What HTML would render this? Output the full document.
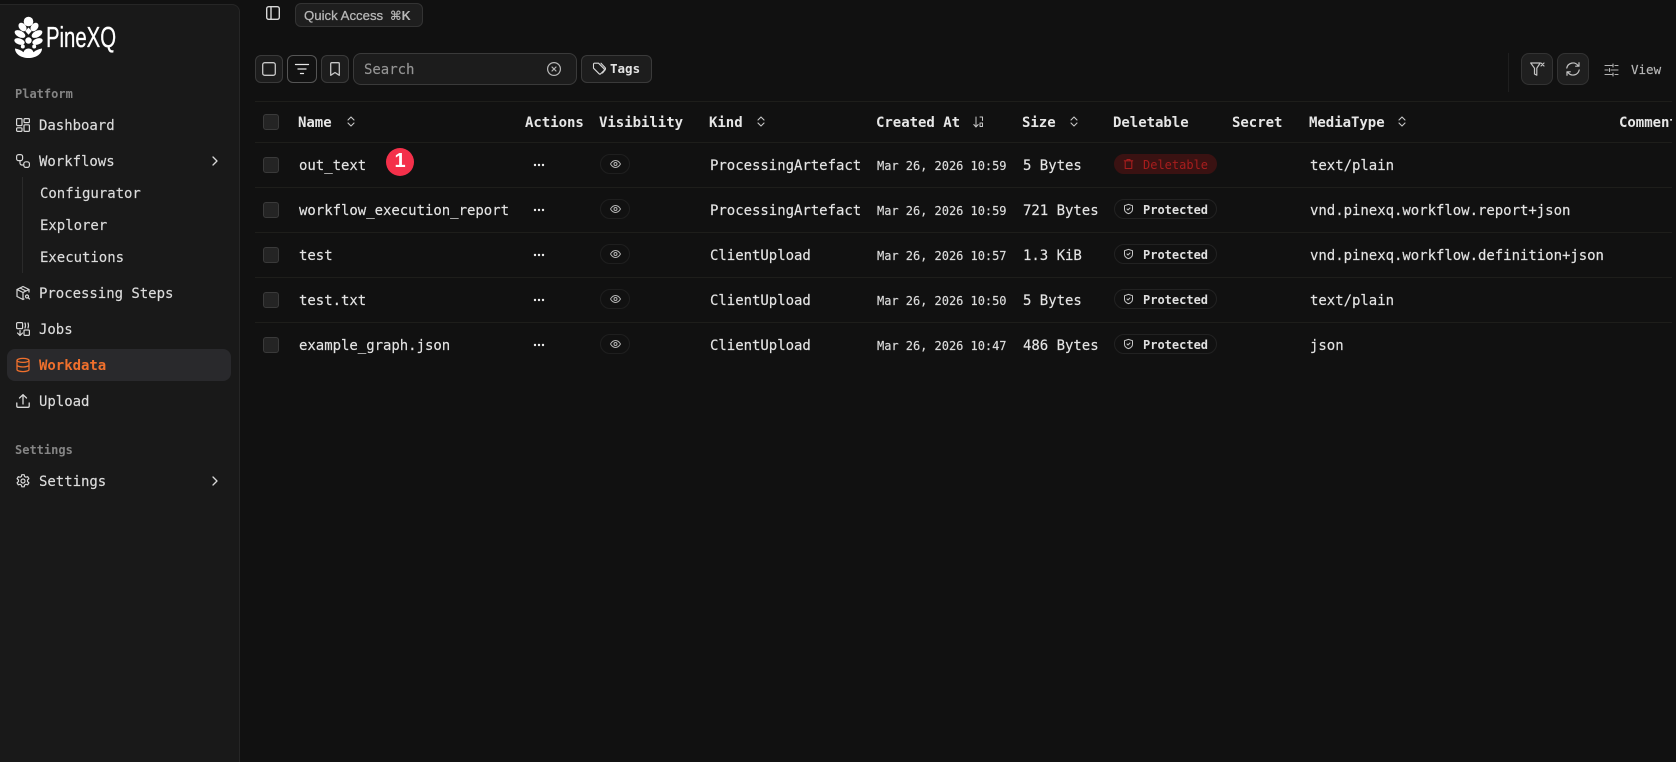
<!DOCTYPE html>
<html><head><meta charset="utf-8"><title>PineXQ Workdata</title>
<style>
*{box-sizing:border-box}
html,body{margin:0;padding:0;width:1676px;height:762px;overflow:hidden;background:#111;color:#e4e4e4;font-family:"DejaVu Sans Mono","Liberation Mono",monospace;font-size:14px;letter-spacing:-.03px}
.a{position:absolute}
.t{position:absolute;white-space:nowrap;line-height:20px;height:20px;margin-top:1px;-webkit-text-stroke:.15px currentColor}
.h{font-weight:700;color:#e6e6e6;-webkit-text-stroke:0}
.d{font-size:12px;color:#dcdcdc}
.l{position:absolute;left:255px;width:1417px;height:1px;background:#1e1e1b}
.cb{position:absolute;left:263px;width:16px;height:16px;border:1px solid #3a3a3a;border-radius:3px;background:#242424}
.eye{position:absolute;left:600px;width:30px;height:20px;border:1px solid #1f1f1f;border-radius:10px}
.bd{position:absolute;left:1114px;width:103px;height:20px;border:1px solid #222;border-radius:10px}
.bt{position:absolute;left:1143px;margin-top:1px;font-size:12px;line-height:20px;font-weight:700;color:#e0e0e0;white-space:nowrap;letter-spacing:0}
.btn{position:absolute;background:#1d1d1d;border:1px solid #3a3a3a;border-radius:6px}
svg{position:absolute;display:block;fill:none;stroke:currentColor;stroke-width:1.5;stroke-linecap:round;stroke-linejoin:round;overflow:visible}
.s{color:#dcdcdc}
</style></head><body>

<!-- Sidebar -->
<div class="a" style="left:0;top:4px;width:240px;height:758px;background:#191919;border:1px solid #262626;border-left:0;border-bottom:0;border-radius:0 8px 0 0"></div>

<svg style="left:14px;top:15px" width="30" height="44" viewBox="0 0 30 44">
<g fill="#fff" stroke="none">
<circle cx="14.500" cy="6.500" r="4.800"/>
<ellipse cx="8.500" cy="12" rx="3.400" ry="4.800" transform="rotate(-40 8.500 12)"/>
<ellipse cx="20.500" cy="12" rx="3.400" ry="4.800" transform="rotate(40 20.500 12)"/>
<path d="M14.500 12.500l3.200 3.600-3.200 3.600-3.200-3.600z"/>
<ellipse cx="6" cy="19" rx="3.200" ry="5.800" transform="rotate(-62 6 19)"/>
<ellipse cx="23" cy="19" rx="3.200" ry="5.800" transform="rotate(62 23 19)"/>
<ellipse cx="5.500" cy="26.500" rx="3" ry="5.400" transform="rotate(-72 5.500 26.500)"/>
<ellipse cx="23.500" cy="26.500" rx="3" ry="5.400" transform="rotate(72 23.500 26.500)"/>
<circle cx="14.500" cy="25.500" r="3.200"/>
<circle cx="8.800" cy="31.500" r="2"/><circle cx="20.200" cy="31.500" r="2"/>
<path d="M1 33.500c3 .5 6 1.500 8.500 3.800.6-2.400 2.700-3.800 5-3.800s4.400 1.400 5 3.800c2.500-2.300 5.500-3.300 8.500-3.800 0 5.500-6 9.500-13.500 9.500S1 39 1 33.500z"/>
</g></svg>
<svg style="left:46px;top:18px" width="72" height="36" viewBox="0 0 72 36">
<text x="0" y="29" fill="#fff" stroke="#fff" stroke-width=".3" font-family="Liberation Sans" font-size="29" textLength="70" lengthAdjust="spacingAndGlyphs">PineXQ</text></svg>

<div class="t" style="left:15px;top:83px;font-size:12px;font-weight:700;color:#858585;letter-spacing:0;-webkit-text-stroke:0">Platform</div>
<div class="t s" style="left:39px;top:115px">Dashboard</div>
<div class="t s" style="left:39px;top:151px">Workflows</div>
<div class="t s" style="left:40px;top:183px">Configurator</div>
<div class="t s" style="left:40px;top:215px">Explorer</div>
<div class="t s" style="left:40px;top:247px">Executions</div>
<div class="a" style="left:22px;top:177px;width:1px;height:96px;background:#2a2a2a"></div>
<div class="t s" style="left:39px;top:283px">Processing Steps</div>
<div class="t s" style="left:39px;top:319px">Jobs</div>
<div class="a" style="left:7px;top:349px;width:224px;height:32px;background:#29292c;border-radius:8px"></div>
<div class="t" style="left:39px;top:355px;color:#f0702c;font-weight:700;-webkit-text-stroke:0">Workdata</div>
<div class="t s" style="left:39px;top:391px">Upload</div>
<div class="t" style="left:15px;top:439px;font-size:12px;font-weight:700;color:#858585;letter-spacing:0;-webkit-text-stroke:0">Settings</div>
<div class="t s" style="left:39px;top:471px">Settings</div>

<!-- Sidebar icons -->
<svg style="left:16px;top:118px;color:#d8d8d8;stroke-width:1.200" width="14" height="14" viewBox="0 0 14 14"><rect x=".6" y=".6" width="5.400" height="7" rx="1"/><rect x="8" y=".6" width="5.400" height="4" rx="1"/><rect x="8" y="6.800" width="5.400" height="6.600" rx="1"/><rect x=".6" y="9.800" width="5.400" height="3.600" rx="1"/></svg>
<svg style="left:16px;top:154px;color:#d8d8d8;stroke-width:1.200" width="14" height="14" viewBox="0 0 14 14"><rect x=".6" y=".6" width="6" height="6" rx="2"/><rect x="7.800" y="7.800" width="5.600" height="5.600" rx="2"/><path d="M4 7v2a2 2 0 0 0 2 2h1.500"/></svg>
<svg style="left:211px;top:156px;color:#d8d8d8;stroke-width:1.300" width="8" height="10" viewBox="0 0 8 10"><path d="M2 1l4 4-4 4"/></svg>
<svg style="left:16px;top:286px;color:#d8d8d8;stroke-width:1.200" width="14" height="14" viewBox="0 0 14 14"><path d="M13 6V3.500L7 .5 1 3.500v7l6 3 1-.5"/><path d="M1 3.500l6 3 6-3M7 6.500v7M4 2l6 3"/><circle cx="11" cy="10.500" r="1.500"/><path d="M12.200 11.700l1.300 1.300"/></svg>
<svg style="left:16px;top:322px;color:#d8d8d8;stroke-width:1.200" width="14" height="14" viewBox="0 0 14 14"><rect x=".6" y=".6" width="6" height="6" rx="1"/><rect x="8" y="8" width="5.400" height="5.400" rx="1"/><path d="M9 1c.6 1.500.6 3.500 0 5M12 1c.6 1.500.6 3.500 0 5M4 8.500v5M1.500 11L4 13.500 6.500 11"/></svg>
<svg style="left:16px;top:358px;color:#f0702c;stroke-width:1.300" width="14" height="14" viewBox="0 0 14 14"><ellipse cx="7" cy="2.400" rx="6" ry="2"/><path d="M1 2.400v9.200c0 1.100 2.700 2 6 2s6-.9 6-2V2.400M1 7c0 1.100 2.700 2 6 2s6-.9 6-2"/></svg>
<svg style="left:16px;top:394px;color:#d8d8d8;stroke-width:1.300" width="14" height="14" viewBox="0 0 14 14"><path d="M.8 9v3a1.300 1.300 0 0 0 1.300 1.300h9.800a1.300 1.300 0 0 0 1.300-1.300V9M3.500 4L7 .7 10.500 4M7 .7V10"/></svg>
<svg style="left:16px;top:474px;color:#d8d8d8;stroke-width:1.200" width="14" height="14" viewBox="0 0 14 14"><path d="M5.800.7h2.400l.4 1.800 1.300.7 1.800-.5 1.200 2-1.400 1.300v1.500l1.400 1.300-1.200 2-1.800-.5-1.300.7-.4 1.800H5.800l-.4-1.800-1.300-.7-1.800.5-1.200-2 1.400-1.300V6L1.100 4.700l1.200-2 1.800.5 1.300-.7z"/><circle cx="7" cy="7" r="2"/></svg>
<svg style="left:211px;top:476px;color:#d8d8d8;stroke-width:1.300" width="8" height="10" viewBox="0 0 8 10"><path d="M2 1l4 4-4 4"/></svg>

<!-- Top bar -->
<svg style="left:266px;top:6px;color:#d8d8d8;stroke-width:1.400" width="14" height="14" viewBox="0 0 14 14"><rect x=".7" y=".7" width="12.600" height="12.600" rx="2"/><path d="M5 .7v12.600"/></svg>
<div class="btn" style="left:295px;top:3px;width:128px;height:24px;background:#1e1e1e;border-color:#333"></div>
<div class="t" style="left:304px;top:5px;font-family:'Liberation Sans',sans-serif;font-size:13.200px;color:#b8b8b8;letter-spacing:0;-webkit-text-stroke:.25px #b8b8b8">Quick Access</div>
<div class="t" style="left:390px;top:5px;font-family:'Liberation Sans','DejaVu Sans',sans-serif;font-size:12.500px;font-weight:700;color:#b8b8b8;letter-spacing:0;-webkit-text-stroke:0">⌘K</div>

<!-- Toolbar -->
<div class="btn" style="left:255px;top:55px;width:28px;height:28px"></div>
<svg style="left:262px;top:62px;color:#c8c8c8;stroke-width:1.300" width="14" height="14" viewBox="0 0 14 14"><rect x=".7" y=".7" width="12.600" height="12.600" rx="2"/></svg>
<div class="btn" style="left:287px;top:55px;width:30px;height:28px;background:#121212;border-color:#555"></div>
<svg style="left:295px;top:63px;color:#e6e6e6;stroke-width:1.300" width="14" height="12" viewBox="0 0 14 12"><path d="M.5 1.500h13M3 6h8M5.500 10.500h3"/></svg>
<div class="btn" style="left:321px;top:55px;width:28px;height:28px"></div>
<svg style="left:330px;top:62px;color:#c8c8c8;stroke-width:1.300" width="10" height="14" viewBox="0 0 10 14"><path d="M.7 1.700a1 1 0 0 1 1-1h6.600a1 1 0 0 1 1 1v11.600L5 10.500.7 13.300z"/></svg>
<div class="btn" style="left:353px;top:53px;width:224px;height:32px;border-radius:8px;background:#1c1c1c"></div>
<div class="t" style="left:364px;top:59px;color:#949494">Search</div>
<svg style="left:547px;top:62px;color:#b8b8b8;stroke-width:1.200" width="14" height="14" viewBox="0 0 14 14"><circle cx="7" cy="7" r="6.400"/><path d="M5 5l4 4M9 5l-4 4"/></svg>
<div class="btn" style="left:581px;top:55px;width:71px;height:28px"></div>
<svg style="left:592px;top:62px;color:#d8d8d8;stroke-width:1.100" width="14" height="14" viewBox="0 0 14 14"><path d="M2.500 1.200h4l5.500 5.500a1.300 1.300 0 0 1 0 1.800L8.800 11.700a1.300 1.300 0 0 1-1.800 0L1.500 6.200V2.200a1 1 0 0 1 1-1z"/><path d="M9 1.200l4 4.300a2 2 0 0 1 0 2.500l-2.500 3"/></svg>
<div class="t" style="left:610px;top:58px;font-size:12.500px;font-weight:700;color:#e4e4e4;letter-spacing:0;-webkit-text-stroke:0">Tags</div>

<div class="a" style="left:1508px;top:53px;width:1px;height:39px;background:#1f1f1f"></div>
<div class="btn" style="left:1521px;top:53px;width:32px;height:32px;border-radius:8px;background:#1f1f1f;border-color:#333"></div>
<svg style="left:1530px;top:62px;color:#c4c4c4;stroke-width:1.200" width="15" height="14" viewBox="0 0 15 14"><path d="M.7 1h9.500L6.800 6.200v7L4.500 12V6.200z"/><path d="M11 1l3 3M14 1l-3 3"/></svg>
<div class="btn" style="left:1557px;top:53px;width:32px;height:32px;border-radius:8px;background:#1f1f1f;border-color:#333"></div>
<svg style="left:1566px;top:62px;color:#c4c4c4;stroke-width:1.200" width="14" height="14" viewBox="0 0 14 14"><path d="M.8 6A6.300 6.300 0 0 1 12 3.500M13 .7v3.500H9.700M13.200 8A6.300 6.300 0 0 1 2 10.500M1 13.300V9.800h3.300"/></svg>
<svg style="left:1605px;top:64px;color:#b4b4b4;stroke-width:1.100" width="13" height="12" viewBox="0 0 13 12"><path d="M0 1.500h7M10 1.500h3M0 6h3M6 6h7M0 10.500h7M10 10.500h3M8 0v3M4.500 4.500v3M8 9v3"/></svg>
<div class="t" style="left:1631px;top:59px;font-size:12.500px;color:#b8b8b8;letter-spacing:0">View</div>

<!-- Header -->
<div class="l" style="top:101px"></div>
<div class="cb" style="top:114px"></div>
<div class="t h" style="left:298px;top:112px">Name</div>
<div class="t h" style="left:525px;top:112px">Actions</div>
<div class="t h" style="left:599px;top:112px">Visibility</div>
<div class="t h" style="left:709px;top:112px">Kind</div>
<div class="t h" style="left:876px;top:112px">Created At</div>
<div class="t h" style="left:1022px;top:112px">Size</div>
<div class="t h" style="left:1113px;top:112px">Deletable</div>
<div class="t h" style="left:1232px;top:112px">Secret</div>
<div class="t h" style="left:1309px;top:112px">MediaType</div>
<div class="a" style="left:1619px;top:113px;width:53px;height:20px;overflow:hidden;line-height:20px;font-weight:700;color:#e6e6e6;white-space:nowrap">Comment</div>

<svg style="left:347px;top:116px;color:#c8c8c8;stroke-width:1.100" width="8" height="11" viewBox="0 0 8 11"><path d="M1 4l3-3 3 3M1 7l3 3 3-3"/></svg>
<svg style="left:757px;top:116px;color:#c8c8c8;stroke-width:1.100" width="8" height="11" viewBox="0 0 8 11"><path d="M1 4l3-3 3 3M1 7l3 3 3-3"/></svg>
<svg style="left:1070px;top:116px;color:#c8c8c8;stroke-width:1.100" width="8" height="11" viewBox="0 0 8 11"><path d="M1 4l3-3 3 3M1 7l3 3 3-3"/></svg>
<svg style="left:1398px;top:116px;color:#c8c8c8;stroke-width:1.100" width="8" height="11" viewBox="0 0 8 11"><path d="M1 4l3-3 3 3M1 7l3 3 3-3"/></svg>
<svg style="left:973px;top:116px;color:#c8c8c8;stroke-width:1" width="11" height="12" viewBox="0 0 11 12"><path d="M3 1v10M.8 8.500L3 11l2.200-2.500M7 1h2.500v3.500M7 7h2.500v3.500H7z"/></svg>

<!-- Rows -->
<div class="l" style="top:142px"></div>
<div class="l" style="top:187px"></div>
<div class="l" style="top:232px"></div>
<div class="l" style="top:277px"></div>
<div class="l" style="top:322px"></div>

<div class="cb" style="top:157px"></div>
<div class="cb" style="top:202px"></div>
<div class="cb" style="top:247px"></div>
<div class="cb" style="top:292px"></div>
<div class="cb" style="top:337px"></div>

<div class="t" style="left:299px;top:155px">out_text</div>
<div class="t" style="left:299px;top:200px">workflow_execution_report</div>
<div class="t" style="left:299px;top:245px">test</div>
<div class="t" style="left:299px;top:290px">test.txt</div>
<div class="t" style="left:299px;top:335px">example_graph.json</div>

<div class="a" style="left:386px;top:148px;width:28px;height:28px;border-radius:50%;background:#f4304a;color:#fff;font-family:'Liberation Sans',sans-serif;font-weight:700;font-size:20px;line-height:27px;text-align:center;letter-spacing:0">1</div>

<svg style="left:533px;top:163px" width="12" height="4" viewBox="0 0 12 4"><g fill="#eee" stroke="none"><circle cx="2" cy="2" r="1.200"/><circle cx="6" cy="2" r="1.200"/><circle cx="10" cy="2" r="1.200"/></g></svg>
<svg style="left:533px;top:208px" width="12" height="4" viewBox="0 0 12 4"><g fill="#eee" stroke="none"><circle cx="2" cy="2" r="1.200"/><circle cx="6" cy="2" r="1.200"/><circle cx="10" cy="2" r="1.200"/></g></svg>
<svg style="left:533px;top:253px" width="12" height="4" viewBox="0 0 12 4"><g fill="#eee" stroke="none"><circle cx="2" cy="2" r="1.200"/><circle cx="6" cy="2" r="1.200"/><circle cx="10" cy="2" r="1.200"/></g></svg>
<svg style="left:533px;top:298px" width="12" height="4" viewBox="0 0 12 4"><g fill="#eee" stroke="none"><circle cx="2" cy="2" r="1.200"/><circle cx="6" cy="2" r="1.200"/><circle cx="10" cy="2" r="1.200"/></g></svg>
<svg style="left:533px;top:343px" width="12" height="4" viewBox="0 0 12 4"><g fill="#eee" stroke="none"><circle cx="2" cy="2" r="1.200"/><circle cx="6" cy="2" r="1.200"/><circle cx="10" cy="2" r="1.200"/></g></svg>

<div class="eye" style="top:154px"></div><div class="eye" style="top:199px"></div><div class="eye" style="top:244px"></div><div class="eye" style="top:289px"></div><div class="eye" style="top:334px"></div>
<svg style="left:610px;top:160px;color:#b4b4b4;stroke-width:1" width="11" height="8" viewBox="0 0 11 8"><path d="M.5 4C2 1.500 3.600.5 5.500.5S9 1.500 10.500 4C9 6.500 7.400 7.500 5.500 7.500S2 6.500.5 4z"/><circle cx="5.500" cy="4" r="1.500"/></svg>
<svg style="left:610px;top:205px;color:#b4b4b4;stroke-width:1" width="11" height="8" viewBox="0 0 11 8"><path d="M.5 4C2 1.500 3.600.5 5.500.5S9 1.500 10.500 4C9 6.500 7.400 7.500 5.500 7.500S2 6.500.5 4z"/><circle cx="5.500" cy="4" r="1.500"/></svg>
<svg style="left:610px;top:250px;color:#b4b4b4;stroke-width:1" width="11" height="8" viewBox="0 0 11 8"><path d="M.5 4C2 1.500 3.600.5 5.500.5S9 1.500 10.500 4C9 6.500 7.400 7.500 5.500 7.500S2 6.500.5 4z"/><circle cx="5.500" cy="4" r="1.500"/></svg>
<svg style="left:610px;top:295px;color:#b4b4b4;stroke-width:1" width="11" height="8" viewBox="0 0 11 8"><path d="M.5 4C2 1.500 3.600.5 5.500.5S9 1.500 10.500 4C9 6.500 7.400 7.500 5.500 7.500S2 6.500.5 4z"/><circle cx="5.500" cy="4" r="1.500"/></svg>
<svg style="left:610px;top:340px;color:#b4b4b4;stroke-width:1" width="11" height="8" viewBox="0 0 11 8"><path d="M.5 4C2 1.500 3.600.5 5.500.5S9 1.500 10.500 4C9 6.500 7.400 7.500 5.500 7.500S2 6.500.5 4z"/><circle cx="5.500" cy="4" r="1.500"/></svg>

<div class="t" style="left:710px;top:155px">ProcessingArtefact</div>
<div class="t" style="left:710px;top:200px">ProcessingArtefact</div>
<div class="t" style="left:710px;top:245px">ClientUpload</div>
<div class="t" style="left:710px;top:290px">ClientUpload</div>
<div class="t" style="left:710px;top:335px">ClientUpload</div>

<div class="t d" style="left:877px;top:155px">Mar 26, 2026 10:59</div>
<div class="t d" style="left:877px;top:200px">Mar 26, 2026 10:59</div>
<div class="t d" style="left:877px;top:245px">Mar 26, 2026 10:57</div>
<div class="t d" style="left:877px;top:290px">Mar 26, 2026 10:50</div>
<div class="t d" style="left:877px;top:335px">Mar 26, 2026 10:47</div>

<div class="t" style="left:1023px;top:155px">5 Bytes</div>
<div class="t" style="left:1023px;top:200px">721 Bytes</div>
<div class="t" style="left:1023px;top:245px">1.3 KiB</div>
<div class="t" style="left:1023px;top:290px">5 Bytes</div>
<div class="t" style="left:1023px;top:335px">486 Bytes</div>

<div class="bd" style="top:154px;background:#3a1212;border-color:#3a1212"></div>
<div class="bt" style="top:154px;color:#a81d1d;font-weight:400">Deletable</div>
<svg style="left:1124px;top:159px;color:#a81d1d;stroke-width:1.100" width="9" height="10" viewBox="0 0 9 10"><path d="M.3 1.800h8.400M3 1.800V.5h3v1.300M1.200 1.800v7.700h6.600V1.800"/></svg>
<div class="bd" style="top:199px"></div><div class="bt" style="top:199px">Protected</div>
<div class="bd" style="top:244px"></div><div class="bt" style="top:244px">Protected</div>
<div class="bd" style="top:289px"></div><div class="bt" style="top:289px">Protected</div>
<div class="bd" style="top:334px"></div><div class="bt" style="top:334px">Protected</div>
<svg style="left:1124px;top:204px;color:#c8c8c8;stroke-width:1" width="9" height="10" viewBox="0 0 9 10"><path d="M4.500.4l4 1.300v3.500c0 2.300-1.800 3.700-4 4.400-2.200-.7-4-2.100-4-4.400V1.700zM3 5l1 1 2-2"/></svg>
<svg style="left:1124px;top:249px;color:#c8c8c8;stroke-width:1" width="9" height="10" viewBox="0 0 9 10"><path d="M4.500.4l4 1.300v3.500c0 2.300-1.800 3.700-4 4.400-2.200-.7-4-2.100-4-4.400V1.700zM3 5l1 1 2-2"/></svg>
<svg style="left:1124px;top:294px;color:#c8c8c8;stroke-width:1" width="9" height="10" viewBox="0 0 9 10"><path d="M4.500.4l4 1.300v3.500c0 2.300-1.800 3.700-4 4.400-2.200-.7-4-2.100-4-4.400V1.700zM3 5l1 1 2-2"/></svg>
<svg style="left:1124px;top:339px;color:#c8c8c8;stroke-width:1" width="9" height="10" viewBox="0 0 9 10"><path d="M4.500.4l4 1.300v3.500c0 2.300-1.800 3.700-4 4.400-2.200-.7-4-2.100-4-4.400V1.700zM3 5l1 1 2-2"/></svg>

<div class="t" style="left:1310px;top:155px">text/plain</div>
<div class="t" style="left:1310px;top:200px">vnd.pinexq.workflow.report+json</div>
<div class="t" style="left:1310px;top:245px">vnd.pinexq.workflow.definition+json</div>
<div class="t" style="left:1310px;top:290px">text/plain</div>
<div class="t" style="left:1310px;top:335px">json</div>

</body></html>
